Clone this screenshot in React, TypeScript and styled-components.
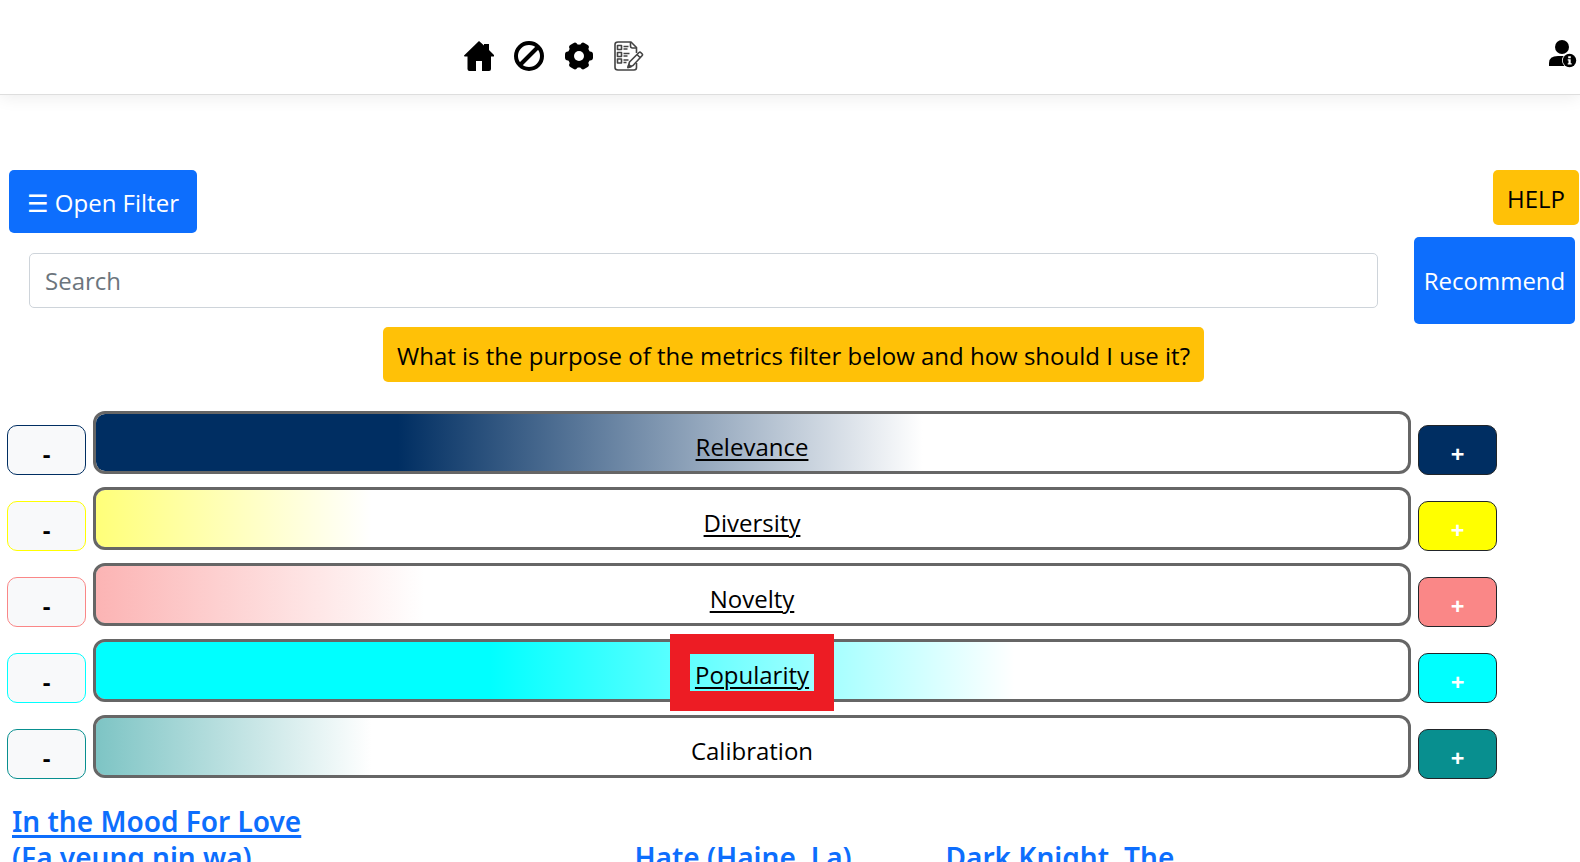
import React from "react";
import styled, { createGlobalStyle } from "styled-components";

const GlobalStyle = createGlobalStyle`
  *, *::before, *::after { box-sizing: border-box; }
  body {
    margin: 0;
    background: #fff;
    color: #000;
    font-family: "Open Sans", "Noto Sans", "DejaVu Sans", sans-serif;
    font-size: 24px;
    line-height: 36px;
    scrollbar-width: none;
  }
  button, input { font: inherit; }
`;

const Header = styled.header`
  display: flex;
  justify-content: space-between;
  align-items: center;
  height: 95px;
  padding: 18px 3px 0 464px;
  border-bottom: 1px solid #dedede;
  box-shadow: 0 2px 16px rgba(0, 0, 0, 0.08);
`;

const Nav = styled.nav`
  display: flex;
  gap: 20px;
`;

const IconLink = styled.a`
  display: block;
  height: 30px;
  color: #000;

  svg { display: block; }
`;

const AccountLink = styled(IconLink)`
  margin-bottom: 5px;
`;

const Page = styled.main`
  padding-top: 75px;
`;

const Toolbar = styled.div`
  display: flex;
  justify-content: space-between;
  align-items: flex-start;
  padding: 0 1px 0 9px;
`;

const Button = styled.button<{ $tone: "primary" | "warning" }>`
  height: 55px;
  padding: 10px 14px 8px;
  border: 0;
  border-radius: 5px;
  background: ${(p) => (p.$tone === "primary" ? "#0d6efd" : "#ffc107")};
  color: ${(p) => (p.$tone === "primary" ? "#fff" : "#000")};
  white-space: nowrap;
  cursor: pointer;
`;

const FilterButton = styled(Button)`
  width: 188px;
  height: 63px;
  padding: 10px 0 8px;
`;

const RecommendButton = styled(Button)`
  width: 161px;
  height: 87px;
  padding: 0;
`;

const SearchForm = styled.form`
  display: flex;
  align-items: center;
  gap: 36px;
  margin-top: 4px;
  padding: 0 5px 0 29px;
`;

const SearchInput = styled.input`
  flex: 1;
  min-width: 0;
  height: 55px;
  padding: 0 15px;
  border: 1px solid #ced4da;
  border-radius: 5px;
  color: #212529;

  &::placeholder { color: #6c757d; opacity: 1; }
`;

const Prompt = styled.div`
  display: flex;
  justify-content: center;
  margin: 3px 0 29px;
  padding-left: 7px;
`;

const Metrics = styled.div`
  display: flex;
  flex-direction: column;
  gap: 12px;
  padding: 0 83px 0 7px;
`;

const MetricRow = styled.div`
  display: flex;
  align-items: flex-start;
  height: 64px;
  gap: 7px;
`;

const StepButton = styled.button<{ $fill: string; $edge: string; $ink: string }>`
  width: 79px;
  height: 50px;
  margin-top: 14px;
  padding: 8px 0 0;
  border: 1px solid ${(p) => p.$edge};
  border-radius: 10px;
  background: ${(p) => p.$fill};
  color: ${(p) => p.$ink};
  font-weight: 700;
  line-height: 36px;
  cursor: pointer;
`;

const Bar = styled.div<{ $color: string; $level: number }>`
  position: relative;
  flex: 1;
  display: flex;
  justify-content: center;
  align-items: center;
  height: 63px;
  padding-top: 8px;
  border: 3px solid #666;
  border-radius: 12px;
  background: linear-gradient(
    to right,
    ${(p) => p.$color} ${(p) => p.$level - 20}%,
    #fff ${(p) => p.$level + 20}%
  ) padding-box;
`;

const MetricLink = styled.a`
  color: #000;
  text-decoration: underline;
  text-decoration-thickness: 2px;
  text-underline-offset: 3px;
`;

const Highlight = styled.span`
  position: absolute;
  top: 50%;
  left: 50%;
  width: 164px;
  height: 77px;
  margin: -37px 0 0 -82px;
  border: 20px solid #ed1c24;
  pointer-events: none;
`;

const Movies = styled.div`
  display: grid;
  grid-template-columns: repeat(5, 1fr);
  align-items: end;
  margin-top: 24px;
  padding: 0 12px;
`;

const MovieLink = styled.a<{ $column: number }>`
  grid-column: ${(p) => p.$column};
  grid-row: 1;
  color: #0d6efd;
  font-family: "Noto Sans", "Open Sans", sans-serif;
  font-size: 28px;
  font-weight: 600;
  line-height: 36px;
  text-decoration: none;
  white-space: nowrap;
`;

const Underlined = styled.span`
  display: block;
  width: max-content;
  text-decoration: underline;
  text-decoration-thickness: 3px;
  text-underline-offset: 3px;
`;

const HomeIcon = () => (
  <svg width="30" height="30" viewBox="0 0 30 30" fill="currentColor">
    <path d="M15 0 20 4.600V3h5v6l5 5c.5.600 0 1.500-.6 1.500H27V28q0 2-2 2h-7V20h-6v10H5.500q-2 0-2-2V15.500H.8c-.8 0-1-.8-.5-1.300Z" />
  </svg>
);

const BanIcon = () => (
  <svg width="30" height="30" viewBox="0 0 30 30" fill="none" stroke="currentColor" strokeWidth="4">
    <circle cx="15" cy="15" r="13" />
    <path d="M24 6 6 24" />
  </svg>
);

const GearIcon = () => (
  <svg width="30" height="30" viewBox="0 0 30 30" fill="currentColor">
    <circle cx="15" cy="15" r="11.500" />
    {[0, 60, 120].map((angle) => (
      <rect key={angle} x="1" y="10.500" width="28" height="9" rx="3" transform={`rotate(${angle} 15 15)`} />
    ))}
    <circle cx="15" cy="15" r="5" fill="#fff" />
  </svg>
);

const SurveyIcon = () => (
  <svg width="30" height="30" viewBox="0 0 30 30" fill="none" stroke="#444" strokeWidth="1.600" strokeLinejoin="round">
    <path d="M22.500 12V6.500L17 1H4Q1 1 1 3.500v23Q1 29 4 29h16q2.500 0 2.500-2.500V22" />
    <path d="M16.500 1v4q0 2 2 2h4" />
    <path d="M3.500 4.500h4v4h-4zM3.500 11.500h4v4h-4zM3.500 18h4v4h-4z" />
    <path d="M9.500 5.500h5M9.500 8h4M9.500 12.500h6M9.500 15h4M9.500 19h5M9.500 21.500h3" />
    <path d="m14 26.500 1.500-5.500L25 11.500q1-.8 2 .2l1 1q1 1 0 2L19 24.500ZM23 13.500l3.500 3.500" fill="#fff" />
    <path d="m14 26.500.8-2.800 2.200 2Z" fill="#333" />
  </svg>
);

const AccountIcon = () => (
  <svg width="29" height="30" viewBox="0 0 29 30" fill="currentColor">
    <circle cx="14" cy="8" r="7" />
    <path d="M1 27v-3q0-7 9-7h8q7 0 7 7v3Z" />
    <circle cx="21.500" cy="21.500" r="7.500" fill="#fff" />
    <circle cx="21.500" cy="21.500" r="6.700" />
    <path d="M20.200 17.200h2.600v2h-2.600zM19.700 20.300h3v4h1v1.300h-4v-1.300h.8v-2.700h-.8Z" fill="#fff" />
  </svg>
);

const metrics = [
  { name: "Relevance", color: "#002e62", level: 43, linked: true },
  { name: "Diversity", color: "#ffff00", level: 1, linked: true },
  { name: "Novelty", color: "#fa8787", level: 5, linked: true },
  { name: "Popularity", color: "#00ffff", level: 50, linked: true, highlighted: true },
  { name: "Calibration", color: "#088f8f", level: 1, linked: false },
];

export default function App() {
  return (
    <>
      <GlobalStyle />
      <Header>
        <Nav>
          <IconLink href="#home" aria-label="Home"><HomeIcon /></IconLink>
          <IconLink href="#blocked" aria-label="Blocked"><BanIcon /></IconLink>
          <IconLink href="#settings" aria-label="Settings"><GearIcon /></IconLink>
          <IconLink href="#survey" aria-label="Survey"><SurveyIcon /></IconLink>
        </Nav>
        <AccountLink href="#account" aria-label="Account"><AccountIcon /></AccountLink>
      </Header>
      <Page>
        <Toolbar>
          <FilterButton type="button" $tone="primary">☰ Open Filter</FilterButton>
          <Button type="button" $tone="warning">HELP</Button>
        </Toolbar>
        <SearchForm onSubmit={(e) => e.preventDefault()}>
          <SearchInput type="text" placeholder="Search" aria-label="Search" />
          <RecommendButton type="submit" $tone="primary">Recommend</RecommendButton>
        </SearchForm>
        <Prompt>
          <Button type="button" $tone="warning">
            What is the purpose of the metrics filter below and how should I use it?
          </Button>
        </Prompt>
        <Metrics>
          {metrics.map((m) => (
            <MetricRow key={m.name}>
              <StepButton type="button" $fill="#f8f9fa" $edge={m.color} $ink="#000" aria-label={`Decrease ${m.name}`}>
                -
              </StepButton>
              <Bar $color={m.color} $level={m.level}>
                {m.linked ? <MetricLink href={`#${m.name.toLowerCase()}`}>{m.name}</MetricLink> : m.name}
                {m.highlighted && <Highlight />}
              </Bar>
              <StepButton type="button" $fill={m.color} $edge="#212529" $ink="#fff" aria-label={`Increase ${m.name}`}>
                +
              </StepButton>
            </MetricRow>
          ))}
        </Metrics>
        <Movies>
          <MovieLink href="#in-the-mood-for-love" $column={1}>
            <Underlined>In the Mood For Love</Underlined>
            (Fa yeung nin wa)
          </MovieLink>
          <MovieLink href="#hate" $column={3}>Hate (Haine, La)</MovieLink>
          <MovieLink href="#dark-knight" $column={4}>Dark Knight, The</MovieLink>
        </Movies>
      </Page>
    </>
  );
}
